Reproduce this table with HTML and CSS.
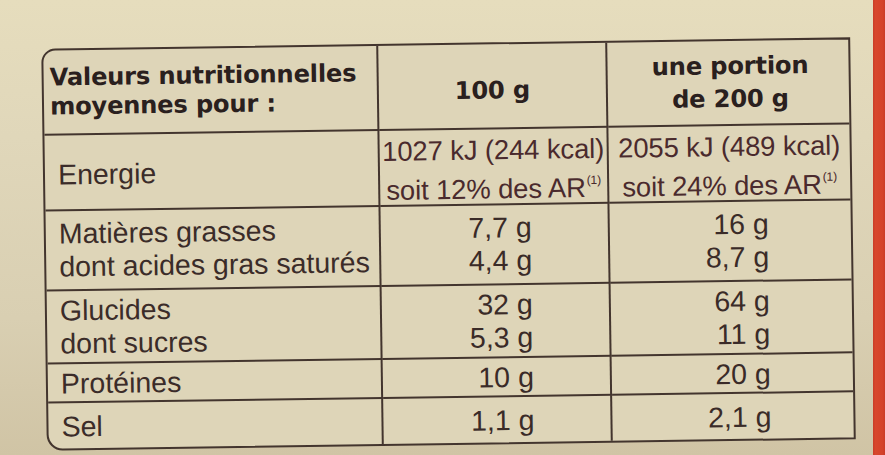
FILE: index.html
```html
<!DOCTYPE html>
<html lang="fr">
<head>
<meta charset="utf-8">
<title>Valeurs nutritionnelles</title>
<link rel="stylesheet" href="styles.css">
</head>
<body>
<div class="page">
  <div class="sheet">
    <div class="label">
      <div class="cell head c1">Valeurs nutritionnelles<br>moyennes pour :</div>
      <div class="cell head c2">100 g</div>
      <div class="cell head c3 portion">une portion<br>de 200 g</div>

      <div class="cell name c1 energy-name">Energie</div>
      <div class="cell energy c2">1027 kJ (244 kcal)<br>soit 12% des AR<sup>(1)</sup></div>
      <div class="cell energy c3">2055 kJ (489 kcal)<br>soit 24% des AR<sup>(1)</sup></div>

      <div class="cell name c1 fat">Matières grasses<br>dont acides gras saturés</div>
      <div class="cell val c2 fat">7,7 g<br>4,4 g</div>
      <div class="cell val c3 fat">16 g<br>8,7 g</div>

      <div class="cell name c1 carbs">Glucides<br>dont sucres</div>
      <div class="cell val c2 carbs">32 g<br>5,3 g</div>
      <div class="cell val c3 carbs">64 g<br>11 g</div>

      <div class="cell name c1 single">Protéines</div>
      <div class="cell val c2 single">10 g</div>
      <div class="cell val c3 single">20 g</div>

      <div class="cell name c1 single last">Sel</div>
      <div class="cell val c2 single last">1,1 g</div>
      <div class="cell val c3 single last">2,1 g</div>
    </div>
  </div>
  <div class="stripe"></div>
</div>
</body>
</html>
```

FILE: styles.css
```css
html, body {
  margin: 0;
  padding: 0;
}

body {
  width: 885px;
  height: 455px;
  overflow: hidden;
  font-family: "Liberation Sans", Arial, sans-serif;
}

.page {
  display: flex;
  width: 885px;
  height: 455px;
}

.sheet {
  flex: 1;
  padding: 43px 0 0 44px;
  background:
    linear-gradient(180deg, #e6ddbd 0%, #e0d7ba 30%, #d9cfb2 70%, #d0c4a5 100%);
}

.stripe {
  width: 12px;
  background: linear-gradient(90deg, #c93c27 0%, #d8472c 20%, #d4412a 80%, #c93a26 100%);
}

.label {
  display: grid;
  grid-template-columns: 335px 229px 241px;
  grid-template-rows: 85px 76px 80px 73px 39px 45px;
  width: max-content;
  border: 2px solid #43352e;
  border-radius: 14px 0 0 16px;
  background: #ded5b8;
  color: #3a2b28;
  transform: rotate(-0.8deg);
  transform-origin: 50% 50%;
}

.cell {
  border-right: 2px solid #43352e;
  border-bottom: 2px solid #43352e;
  box-sizing: border-box;
  font-size: 28.5px;
  line-height: 33px;
}

.c3 {
  border-right: none;
}

.last {
  border-bottom: none;
}

.head {
  display: flex;
  align-items: center;
  font-family: "DejaVu Sans", sans-serif;
  font-weight: bold;
  font-size: 24.2px;
  line-height: 29px;
  color: #2a201e;
  letter-spacing: -0.2px;
}

.head.c1 {
  padding-left: 6px;
}

.head.c2,
.head.c3 {
  justify-content: center;
  text-align: center;
}

.head.c2 {
  padding-top: 10px;
}

.portion {
  line-height: 33px;
  padding-left: 4px;
}

.name {
  padding-left: 13px;
  color: #3b2c29;
}

.energy-name {
  display: flex;
  align-items: center;
  padding-top: 4px;
}

.energy {
  text-align: center;
  line-height: 39px;
  font-size: 27.4px;
  color: #4a2a2d;
  padding-top: 1px;
  white-space: nowrap;
  letter-spacing: -0.1px;
}

.energy sup {
  font-size: 12px;
  line-height: 0;
  vertical-align: 13px;
  margin-left: 1px;
}

.val {
  text-align: right;
  color: #3a2b28;
}

.val.c2 {
  padding-right: 76px;
}

.val.c3 {
  padding-right: 82px;
}

.fat {
  padding-top: 6px;
}

.carbs {
  padding-top: 3px;
}

.single {
  padding-top: 2px;
  line-height: 34px;
}

.single.last {
  padding-top: 6px;
}
```
